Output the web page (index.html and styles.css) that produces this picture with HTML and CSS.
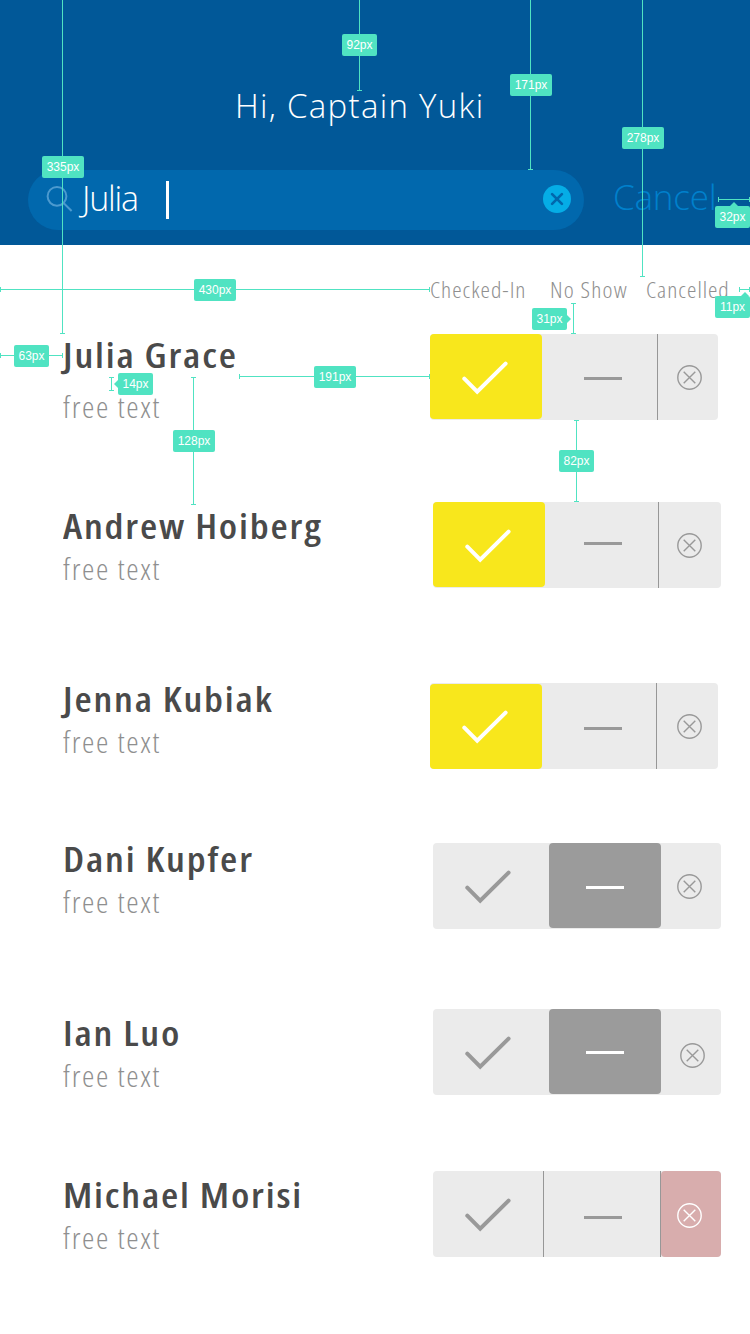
FILE: index.html
```html
<!DOCTYPE html>
<html lang="en">
<head>
<meta charset="utf-8">
<title>Captain check-in</title>
<link rel="stylesheet" href="styles.css">
</head>
<body>
<svg class="defs" width="0" height="0" aria-hidden="true">
  <symbol id="check" viewBox="0 0 46 34"><path d="M2.3 17.7 15.2 30.7 43.6 2.6" fill="none" stroke="currentColor" stroke-width="4" stroke-linecap="round" stroke-linejoin="miter"/></symbol>
  <symbol id="cross" viewBox=".5 .5 26 26"><g fill="none" stroke="currentColor" stroke-width="1.4"><circle cx="13" cy="13" r="11.7"/><path d="M7.2 7.2 18.8 18.8M18.8 7.2 7.2 18.8"/></g></symbol>
</svg>
<div class="screen">
  <header class="header">
    <h1 class="greeting">Hi, Captain Yuki</h1>
    <div class="search-row">
      <div class="search">
        <svg class="search-icon" width="28" height="28" viewBox="0 0 28 28"><g fill="none" stroke="currentColor" stroke-width="2"><circle cx="11" cy="11.3" r="9.4"/><path d="M17.8 18.2 25.6 26"/></g></svg>
        <span class="query">Julia</span>
        <span class="caret"></span>
        <svg class="clear" width="28" height="28" viewBox="0 0 28 28"><circle cx="14" cy="14" r="14" fill="#05ade6"/><path d="M9.1 9.1 18.9 18.9M18.9 9.1 9.1 18.9" stroke="#0168ad" stroke-width="2.7" stroke-linecap="round"/></svg>
      </div>
      <span class="cancel">Cancel</span>
    </div>
  </header>

  <div class="columns">
    <span class="col col-in">Checked-In</span>
    <span class="col col-no">No Show</span>
    <span class="col col-out">Cancelled</span>
  </div>

  <main class="list">
    <section class="row row-julia">
      <div class="person"><h2 class="name">Julia Grace</h2><p class="note">free text</p></div>
      <div class="control">
        <div class="seg seg-in on-in"><svg class="check"><use href="#check"/></svg></div>
        <div class="seg seg-no"><i class="dash"></i></div>
        <div class="seg seg-out ruled"><svg class="cross"><use href="#cross"/></svg></div>
      </div>
    </section>
    <section class="row row-andrew">
      <div class="person"><h2 class="name">Andrew Hoiberg</h2><p class="note">free text</p></div>
      <div class="control">
        <div class="seg seg-in on-in"><svg class="check"><use href="#check"/></svg></div>
        <div class="seg seg-no"><i class="dash"></i></div>
        <div class="seg seg-out ruled"><svg class="cross"><use href="#cross"/></svg></div>
      </div>
    </section>
    <section class="row row-jenna">
      <div class="person"><h2 class="name">Jenna Kubiak</h2><p class="note">free text</p></div>
      <div class="control">
        <div class="seg seg-in on-in"><svg class="check"><use href="#check"/></svg></div>
        <div class="seg seg-no"><i class="dash"></i></div>
        <div class="seg seg-out ruled"><svg class="cross"><use href="#cross"/></svg></div>
      </div>
    </section>
    <section class="row row-dani">
      <div class="person"><h2 class="name">Dani Kupfer</h2><p class="note">free text</p></div>
      <div class="control">
        <div class="seg seg-in"><svg class="check"><use href="#check"/></svg></div>
        <div class="seg seg-no on-no"><i class="dash"></i></div>
        <div class="seg seg-out"><svg class="cross"><use href="#cross"/></svg></div>
      </div>
    </section>
    <section class="row row-ian">
      <div class="person"><h2 class="name">Ian Luo</h2><p class="note">free text</p></div>
      <div class="control">
        <div class="seg seg-in"><svg class="check"><use href="#check"/></svg></div>
        <div class="seg seg-no on-no"><i class="dash"></i></div>
        <div class="seg seg-out"><svg class="cross"><use href="#cross"/></svg></div>
      </div>
    </section>
    <section class="row row-michael">
      <div class="person"><h2 class="name">Michael Morisi</h2><p class="note">free text</p></div>
      <div class="control">
        <div class="seg seg-in"><svg class="check"><use href="#check"/></svg></div>
        <div class="seg seg-no ruled ruled-end"><i class="dash"></i></div>
        <div class="seg seg-out on-out"><svg class="cross"><use href="#cross"/></svg></div>
      </div>
    </section>
  </main>

  <!-- spacing annotations -->
  <svg class="specs" width="750" height="1334" viewBox="0 0 750 1334">
    <path class="rule" d="M62.5 0V334M60 333.5H65M359.5 0V91M357 90.5H362M530.5 0V170M528 169.5H533M642.5 0V277M640 276.5H645
      M718 199.5H750M718.5 197V202M749.5 197V202
      M0 289.5H430M.5 287V292M429.5 287V292
      M739 289.5H750M739.5 287V292M749.5 287V292
      M573.5 303V334M571 303.5H576M571 333.5H576
      M0 355.5H63M.5 353V358M62.5 353V358
      M239 376.5H430M239.5 374V379M429.5 374V379
      M111.5 377V391M109 377.5H114M109 390.5H114
      M193.5 377V505M191 377.5H196M191 504.5H196
      M576.5 420V502M574 420.5H579M574 501.5H579"/>
    <g class="tags">
      <rect x="42" y="156" width="42" height="22" rx="2"/><rect x="342" y="34" width="35" height="22" rx="2"/><rect x="510" y="74" width="42" height="22" rx="2"/><rect x="622" y="127" width="42" height="22" rx="2"/>
      <rect x="715" y="206" width="35" height="22" rx="2"/><path d="M730 206 734 202 738 206Z"/>
      <rect x="194" y="279" width="42" height="22" rx="2"/>
      <rect x="715" y="296" width="35" height="22" rx="2"/><path d="M741 296 745 292 749 296Z"/>
      <rect x="532" y="308" width="35" height="22" rx="2"/><path d="M567 315 571 319 567 323Z"/>
      <rect x="14" y="345" width="35" height="22" rx="2"/><rect x="314" y="366" width="42" height="22" rx="2"/>
      <rect x="118" y="373" width="35" height="22" rx="2"/><path d="M118 380 114 384 118 388Z"/>
      <rect x="173" y="430" width="42" height="22" rx="2"/><rect x="559" y="450" width="35" height="22" rx="2"/>
    </g>
    <g class="tag-text">
      <text x="63" y="171">335px</text><text x="359.5" y="49">92px</text><text x="531" y="89">171px</text><text x="643" y="142">278px</text><text x="732.5" y="221">32px</text><text x="215" y="294">430px</text><text x="732.5" y="311">11px</text><text x="549.5" y="323">31px</text><text x="31.5" y="360">63px</text><text x="335" y="381">191px</text><text x="135.5" y="388">14px</text><text x="194" y="445">128px</text><text x="576.5" y="465">82px</text>
    </g>
  </svg>
</div>
</body>
</html>
```

FILE: styles.css
```css
* { box-sizing: border-box; margin: 0; padding: 0; }
body { background: #fff; font-family: "Open Sans", "Noto Sans", sans-serif; }
.defs { display: block; }
.screen { position: relative; width: 750px; height: 1334px; overflow: hidden; }

.header { height: 245px; background: #015898; padding: 82px 0 0 28px; }
.greeting {
  height: 88px; padding-left: 207px; line-height: 47px; white-space: nowrap;
  font-size: 33px; font-weight: 300; letter-spacing: 1.3px; color: #fff;
}
.search-row { display: flex; }
.search {
  display: flex; align-items: flex-start; width: 556px; height: 60px;
  border-radius: 30px; background: #0168ad; padding-left: 18px;
}
.search-icon { margin-top: 15px; color: #4c9acf; }
.query {
  width: 85px; margin-left: 8px; line-height: 56px;
  font-size: 34px; font-weight: 300; letter-spacing: -1.2px; color: #fff;
}
.caret { width: 3px; height: 38px; margin: 11px 0 0 -1px; background: #fff; }
.clear { margin: 15px 13px 0 auto; }
.cancel {
  margin-left: 29px; line-height: 54px;
  font-size: 35px; font-weight: 300; letter-spacing: -0.2px; color: #0080cc;
}

/* condensed face, slightly widened */
.col, .name, .note { font-stretch: 75%; transform: scaleX(1.08); transform-origin: 0 0; white-space: nowrap; }

.columns { display: flex; height: 89px; padding: 29px 0 0 430px; }
.col {
  line-height: 30px;
  font-size: 22px; font-weight: 300; letter-spacing: 0.9px; color: #8f8f8f;
}
.col-in { width: 119.5px; }
.col-no { width: 96px; letter-spacing: 1.1px; }

.row { display: flex; }
.person { width: 367px; margin-left: 63px; color: #4a4a4a; }
.name { line-height: 44px; font-size: 35px; font-weight: 600; letter-spacing: 1.6px; transform: scaleX(1.13); }
.note { line-height: 42px; font-size: 29px; font-weight: 300; letter-spacing: 1.5px; color: #8f8f8f; }

.control { display: flex; flex: none; width: 288px; height: 86px; border-radius: 4px; background: #ebebeb; color: #999; }
.seg { display: flex; align-items: flex-start; height: 86px; }
.ruled { border-left: 1px solid #979797; }
.ruled-end { border-right: 1px solid #979797; }
.seg-in { width: var(--in); }
.seg-no { width: var(--no); }
.seg-out { flex: 1; }
.on-in { height: 85px; border-radius: 4px; background: #f8e71c; color: #fff; }
.on-no { height: 85px; border-radius: 4px; background: #9b9b9b; color: #fff; }
.on-out { border-radius: 4px; background: #d8adad; color: #fff; }
.check { width: 46px; height: 34px; margin: 27px 0 0 32px; }
.dash { width: 37.7px; height: 3px; margin: var(--dash); background: currentColor; }
.cross { width: 26px; height: 26px; margin: var(--cross); }

.row-julia { height: 168px; --in: 112px; --no: 115px; --dash: 43px 0 0 42px; --cross: 31px 0 0 19px; }
.row-andrew { height: 181px; --in: 112px; --no: 113px; --dash: 40px 0 0 39px; --cross: 31px 0 0 18px; }
.row-jenna { height: 160px; --in: 112px; --no: 114px; --dash: 44px 0 0 42px; --cross: 31px 0 0 20px; }
.row-dani { height: 166px; --in: 116px; --no: 112px; --dash: 43px 0 0 37px; --cross: 31px 0 0 16px; }
.row-ian { height: 162px; --in: 116px; --no: 112px; --dash: 42px 0 0 37px; --cross: 34px 0 0 19px; }
.row-michael { height: 163px; --in: 110px; --no: 118px; --dash: 45px 0 0 40px; --cross: 32px 0 0 16px; }
.row-andrew .control, .row-dani .control, .row-ian .control, .row-michael .control { margin-left: 3px; }
.row-jenna .on-in { margin-top: 1px; }
.row-jenna .check { margin-top: 26px; }

.row-julia .person { margin-top: -1px; }
.row-julia .note { margin-top: 9px; }
.row-andrew .person, .row-ian .person, .row-michael .person { margin-top: 2px; }
.row-jenna .person, .row-dani .person { margin-top: -6px; }

.specs { position: absolute; left: 0; top: 0; }
.rule { fill: none; stroke: #50e3c2; stroke-width: 1; }
.tags { fill: #50e3c2; }
.tag-text { fill: #fff; font-family: "Liberation Sans", Arial, sans-serif; font-size: 12px; text-anchor: middle; }
```
